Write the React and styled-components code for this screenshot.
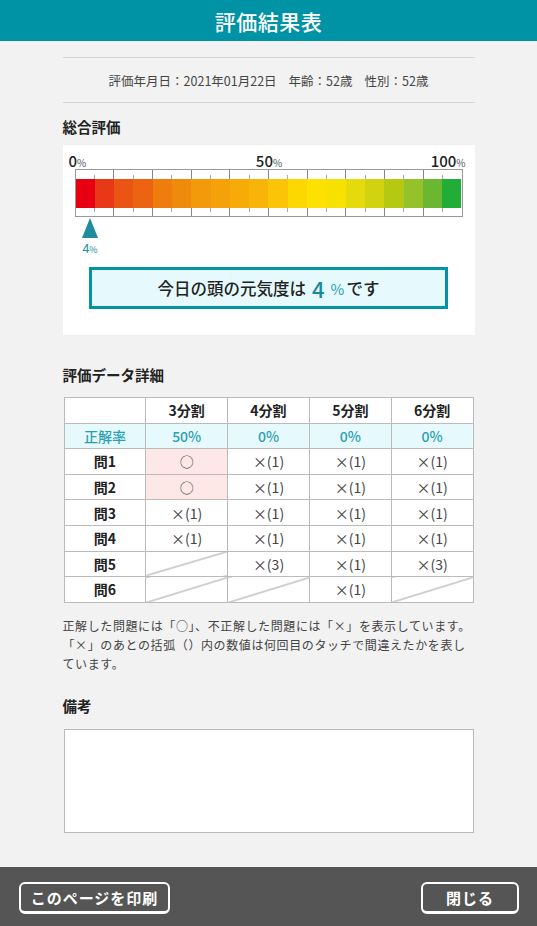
import React from "react";
import styled, { createGlobalStyle } from "styled-components";

const GlobalStyle = createGlobalStyle`
  html, body { margin: 0; padding: 0; }
  body {
    background: #f2f2f2;
    font-family: "Noto Sans CJK JP", "Noto Sans", sans-serif;
    color: #222;
  }
  * { box-sizing: border-box; }
`;

const Page = styled.div`
  min-height: 926px;
  display: flex;
  flex-direction: column;
`;

const Header = styled.header`
  height: 41px;
  background: #0092a5;
  color: #fff;
  display: flex;
  align-items: center;
  justify-content: center;
  font-size: 21px;
  font-weight: 500;
  letter-spacing: 0.5px;
`;

const Main = styled.main`
  flex: 1;
  width: 412px;
  margin: 0 auto;
  padding-top: 16px;
`;

const InfoBar = styled.div`
  border-top: 1px solid #d3d3d3;
  border-bottom: 1px solid #d3d3d3;
  height: 46px;
  display: flex;
  align-items: center;
  justify-content: center;
  gap: 12px;
  font-size: 12.5px;
  color: #444;
`;

const SectionTitle = styled.h2`
  margin: ${(p) => p.$mt}px 0 ${(p) => p.$mb}px;
  font-size: 14.5px;
  line-height: 20px;
  font-weight: 700;
  color: #222;
`;

const Panel = styled.section`
  background: #fff;
  padding: 8px 12px 26px;
`;

const ScaleLabels = styled.div`
  display: grid;
  grid-template-columns: 1fr auto 1fr;
  height: 16px;
  align-items: end;
  margin: 0 -3px 0 -6px;
`;

const ScaleLabel = styled.span`
  justify-self: ${(p) => p.$align};
  font-size: 15px;
  line-height: 16px;
  font-weight: 500;
  color: #222;
  padding-left: ${(p) => (p.$align === "center" ? "4px" : "0")};
  small {
    font-size: 10px;
    font-weight: 400;
    color: #555;
  }
`;

const Gauge = styled.div`
  border: 1px solid #999;
  display: flex;
  flex-direction: column;
`;

const TickRow = styled.div`
  display: flex;
  height: ${(p) => p.$h}px;
`;

const TickCell = styled.div`
  flex: 1;
  border-right: 1px solid #888;
  &:last-child { border-right: none; }
  background-image: linear-gradient(#aaa, #aaa);
  background-repeat: no-repeat;
  background-size: 1px 4px;
  background-position: ${(p) => (p.$top ? "center bottom" : "center top")};
`;

const Band = styled.div`
  display: flex;
  height: 29px;
`;

const Segment = styled.div`
  flex: 1;
  background: ${(p) => p.$color};
`;

const MarkerTrack = styled.div`
  position: relative;
  height: 40px;
`;

const Marker = styled.div`
  position: absolute;
  top: 1px;
  transform: translateX(-50%);
  display: flex;
  flex-direction: column;
  align-items: center;
`;

const Triangle = styled.div`
  width: 0;
  height: 0;
  border-left: 8px solid transparent;
  border-right: 8px solid transparent;
  border-bottom: 20px solid #1e8c9c;
`;

const MarkerLabel = styled.span`
  margin-top: 3px;
  font-size: 12.5px;
  line-height: 14px;
  color: #1e8c9c;
  small { font-size: 9px; }
`;

const ResultBox = styled.div`
  width: 359px;
  height: 42px;
  margin: 10px auto 0;
  border: 3px solid #0093a8;
  background: #e6fafd;
  display: flex;
  align-items: center;
  justify-content: center;
  font-size: 16.5px;
  font-weight: 500;
  color: #222;
`;

const ResultValue = styled.span`
  color: #1a8a9a;
  font-size: 22px;
  font-weight: 500;
  margin: 0 6px 0 6px;
  line-height: 1;
`;

const ResultUnit = styled.span`
  color: #2a9fb2;
  font-size: 15px;
  font-weight: 400;
  margin-right: 2px;
`;

const Table = styled.table`
  width: 410px;
  margin: 0 1px;
  border-collapse: collapse;
  table-layout: fixed;
  background: #fff;
`;

const Cell = styled.td`
  border: 1px solid #bbb;
  height: 25.6px;
  padding: 0;
  text-align: center;
  font-size: 14px;
  color: #444;
  background: ${(p) =>
    p.$variant === "ok"
      ? "#fde7e7"
      : p.$variant === "none"
      ? "linear-gradient(to bottom right, #fff calc(50% - 0.9px), #999 50%, #fff calc(50% + 0.9px))"
      : "#fff"};
`;

const HeadCell = styled(Cell)`
  font-weight: 700;
  color: #222;
`;

const RateCell = styled(Cell)`
  color: #2a9fb4;
  font-weight: 500;
  background: #e6f9fc;
`;

const Notes = styled.p`
  margin: 13px 0 0;
  font-size: 12px;
  line-height: 19px;
  letter-spacing: 0.6px;
  color: #444;
  white-space: nowrap;
`;

const RemarkBox = styled.div`
  height: 104px;
  margin: 0 1px;
  background: #fff;
  border: 1px solid #bbb;
`;

const Footer = styled.footer`
  height: 59px;
  background: #555;
  display: flex;
  align-items: flex-start;
  justify-content: space-between;
  padding: 15px 18px 0 19px;
`;

const FooterButton = styled.button`
  width: ${(p) => p.$w}px;
  height: 32px;
  border: 2px solid #fff;
  border-bottom-width: 3px;
  border-radius: 6px;
  background: #555;
  color: #fff;
  font-family: inherit;
  font-size: 15px;
  font-weight: 700;
  letter-spacing: 1px;
  display: flex;
  align-items: center;
  justify-content: center;
  padding: 0;
  cursor: pointer;
`;

const COLORS = [
  "#e60012", "#e83817", "#ea5514", "#ec6412", "#ef7d0e",
  "#f08a0c", "#f39a0a", "#f5a20a", "#f6ab09", "#f8b408",
  "#fbc406", "#fdd800", "#ffe100", "#f6e100", "#e5da0c",
  "#d2d310", "#b5c913", "#95c12a", "#6cb732", "#22ac38",
];

const VALUE = 4;

const HEAD = ["3分割", "4分割", "5分割", "6分割"];
const RATES = ["50%", "0%", "0%", "0%"];
const ROWS = [
  ["問1", ["ok", "×(1)", "×(1)", "×(1)"]],
  ["問2", ["ok", "×(1)", "×(1)", "×(1)"]],
  ["問3", ["×(1)", "×(1)", "×(1)", "×(1)"]],
  ["問4", ["×(1)", "×(1)", "×(1)", "×(1)"]],
  ["問5", [null, "×(3)", "×(1)", "×(3)"]],
  ["問6", [null, null, "×(1)", null]],
];

export default function App() {
  return (
    <Page>
      <GlobalStyle />
      <Header>評価結果表</Header>
      <Main>
        <InfoBar>
          <span>評価年月日：2021年01月22日</span>
          <span>年齢：52歳</span>
          <span>性別：52歳</span>
        </InfoBar>

        <SectionTitle $mt={14} $mb={8}>総合評価</SectionTitle>
        <Panel>
          <ScaleLabels>
            <ScaleLabel $align="start">0<small>%</small></ScaleLabel>
            <ScaleLabel $align="center">50<small>%</small></ScaleLabel>
            <ScaleLabel $align="end">100<small>%</small></ScaleLabel>
          </ScaleLabels>
          <Gauge>
            <TickRow $h={9}>
              {Array.from({ length: 10 }).map((_, i) => (
                <TickCell key={i} $top />
              ))}
            </TickRow>
            <Band>
              {COLORS.map((c, i) => (
                <Segment key={i} $color={c} />
              ))}
            </Band>
            <TickRow $h={8}>
              {Array.from({ length: 10 }).map((_, i) => (
                <TickCell key={i} />
              ))}
            </TickRow>
          </Gauge>
          <MarkerTrack>
            <Marker style={{ left: `${VALUE}%` }}>
              <Triangle />
              <MarkerLabel>{VALUE}<small>%</small></MarkerLabel>
            </Marker>
          </MarkerTrack>
          <ResultBox>
            今日の頭の元気度は<ResultValue>{VALUE}</ResultValue>
            <ResultUnit>%</ResultUnit>です
          </ResultBox>
        </Panel>

        <SectionTitle $mt={30} $mb={12}>評価データ詳細</SectionTitle>
        <Table>
          <tbody>
            <tr>
              <HeadCell />
              {HEAD.map((h) => (
                <HeadCell key={h}>{h}</HeadCell>
              ))}
            </tr>
            <tr>
              <RateCell>正解率</RateCell>
              {RATES.map((r, i) => (
                <RateCell key={i}>{r}</RateCell>
              ))}
            </tr>
            {ROWS.map(([label, cells]) => (
              <tr key={label}>
                <HeadCell>{label}</HeadCell>
                {cells.map((c, i) =>
                  c === "ok" ? (
                    <Cell key={i} $variant="ok">○</Cell>
                  ) : c === null ? (
                    <Cell key={i} $variant="none" />
                  ) : (
                    <Cell key={i}>{c}</Cell>
                  )
                )}
              </tr>
            ))}
          </tbody>
        </Table>

        <Notes>
          正解した問題には「○」、不正解した問題には「×」を表示しています。
          <br />
          「×」のあとの括弧（）内の数値は何回目のタッチで間違えたかを表し
          <br />
          ています。
        </Notes>

        <SectionTitle $mt={23} $mb={13}>備考</SectionTitle>
        <RemarkBox />
      </Main>
      <Footer>
        <FooterButton $w={151}>このページを印刷</FooterButton>
        <FooterButton $w={98}>閉じる</FooterButton>
      </Footer>
    </Page>
  );
}
